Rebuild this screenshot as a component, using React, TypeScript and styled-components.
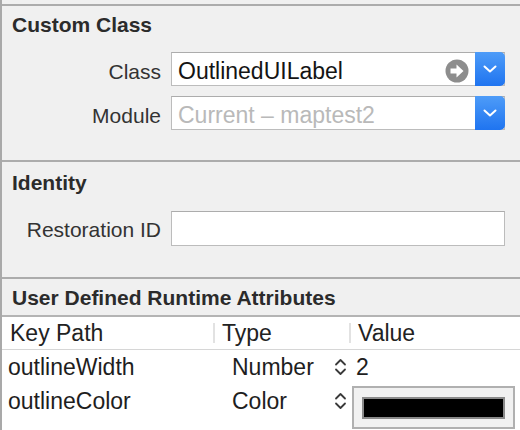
import React from "react";
import styled, { createGlobalStyle } from "styled-components";

const Global = createGlobalStyle`
  html, body { margin: 0; padding: 0; background: #f0f0f0; }
  body { font-family: "Liberation Sans", Arial, sans-serif; }
  #root { width: 520px; height: 430px; overflow: hidden; }
`;

const Inspector = styled.div`
  width: 520px;
  height: 430px;
  box-sizing: border-box;
  border-left: 2px solid #a9a9a9;
  padding-top: 4px;
  background: #f0f0f0;
  display: flex;
  flex-direction: column;
`;

const Section = styled.section<{ $top: number; $gap: number; $bottom: number; $grow?: boolean }>`
  border-top: 2px solid #acacac;
  padding: ${(p) => p.$top}px 15px ${(p) => p.$bottom}px 10px;
  display: flex;
  flex-direction: column;
  gap: ${(p) => p.$gap}px;
  flex: ${(p) => (p.$grow ? 1 : "none")};
`;

const Title = styled.h2`
  margin: 0;
  font-size: 21px;
  line-height: 24px;
  font-weight: bold;
  color: #2b2b2b;
  white-space: nowrap;
`;

const Form = styled.div<{ $rowGap: number }>`
  display: grid;
  grid-template-columns: 149px 1fr;
  column-gap: 10px;
  row-gap: ${(p) => p.$rowGap}px;
  align-items: center;
`;

const Label = styled.label<{ $drop: number }>`
  text-align: right;
  font-size: 21px;
  color: #333;
  white-space: nowrap;
  padding-top: ${(p) => p.$drop}px;
`;

const Field = styled.div<{ $height: number }>`
  height: ${(p) => p.$height}px;
  box-sizing: border-box;
  display: flex;
  align-items: stretch;
  background: #fff;
  border: 1px solid #bcbcbc;
  border-top-color: #acacac;
`;

const FieldText = styled.span<{ $muted?: boolean }>`
  flex: 1;
  display: flex;
  align-items: center;
  padding: 5px 0 0 6px;
  font-size: 23px;
  color: ${(p) => (p.$muted ? "#b9b9b9" : "#141414")};
  white-space: nowrap;
  overflow: hidden;
`;

const GoIcon = styled.span`
  display: flex;
  align-items: center;
  padding: 4px 6px 0 0;
`;

const PopButton = styled.span`
  width: 30px;
  margin: -1px -1px -1px 0;
  border-radius: 0 5px 5px 0;
  background: linear-gradient(#4e9cf8, #1f74f0);
  display: flex;
  align-items: center;
  justify-content: center;
`;

const Table = styled.div`
  margin: 0 -15px 0 -10px;
  border-top: 2px solid #b4b4b4;
  background: #fff;
  flex: 1;
`;

const HeaderRow = styled.div`
  height: 32px;
  display: flex;
  align-items: center;
  border-bottom: 1px solid #d6d6d6;
  font-size: 23px;
  color: #222;
`;

const HeaderCell = styled.span<{ $width?: number; $pad: number }>`
  width: ${(p) => (p.$width ? `${p.$width}px` : "auto")};
  padding-left: ${(p) => p.$pad}px;
  box-sizing: border-box;
  white-space: nowrap;
`;

const ColumnRule = styled.span`
  width: 2px;
  height: 20px;
  background: #e2e2e2;
`;

const Row = styled.div<{ $height: number }>`
  height: ${(p) => p.$height}px;
  display: grid;
  grid-template-columns: 230px 102px 22px 1fr;
  align-items: start;
  font-size: 23px;
  color: #1e1e1e;
`;

const Cell = styled.span<{ $pad?: number }>`
  line-height: 34px;
  padding-left: ${(p) => p.$pad ?? 0}px;
  white-space: nowrap;
`;

const Stepper = styled.span`
  height: 34px;
  display: flex;
  align-items: center;
`;

const ColorWell = styled.span`
  margin: 2px 0 0 -4px;
  width: 163px;
  height: 43px;
  box-sizing: border-box;
  border: 2px solid #b0b0b0;
  background: #f1f1f1;
  padding: 9px 8px 8px 8px;
  display: flex;
`;

const Swatch = styled.span<{ $color: string }>`
  flex: 1;
  background: ${(p) => p.$color};
  border: 2px solid #8a8a8a;
`;

const ArrowCircle = () => (
  <svg width="24" height="24" viewBox="0 0 24 24">
    <circle cx="12" cy="12" r="11.5" fill="#8d8d8d" />
    <path d="M5.5 9.5h6V5.5l7 6.5-7 6.5v-4h-6z" fill="#fff" />
  </svg>
);

const Chevron = () => (
  <svg width="14" height="8" viewBox="0 0 14 8">
    <path d="M1.5 1.5 7 6.5l5.5-5" fill="none" stroke="#fff" strokeWidth="2" strokeLinecap="round" strokeLinejoin="round" />
  </svg>
);

const UpDown = () => (
  <svg width="13" height="20" viewBox="0 0 13 20">
    <path d="M2 7.5 6.5 3 11 7.5M2 12.5 6.5 17 11 12.5" fill="none" stroke="#3a3a3a" strokeWidth="1.8" strokeLinecap="round" strokeLinejoin="round" />
  </svg>
);

export default function App() {
  return (
    <>
      <Global />
      <Inspector>
        <Section $top={7} $gap={15} $bottom={30}>
          <Title>Custom Class</Title>
          <Form $rowGap={10}>
            <Label $drop={6}>Class</Label>
            <Field $height={34}>
              <FieldText>OutlinedUILabel</FieldText>
              <GoIcon>
                <ArrowCircle />
              </GoIcon>
              <PopButton>
                <Chevron />
              </PopButton>
            </Field>
            <Label $drop={6}>Module</Label>
            <Field $height={34}>
              <FieldText $muted>Current – maptest2</FieldText>
              <PopButton>
                <Chevron />
              </PopButton>
            </Field>
          </Form>
        </Section>
        <Section $top={9} $gap={16} $bottom={31}>
          <Title>Identity</Title>
          <Form $rowGap={0}>
            <Label $drop={2}>Restoration ID</Label>
            <Field $height={35} />
          </Form>
        </Section>
        <Section $top={7} $gap={5} $bottom={0} $grow>
          <Title>User Defined Runtime Attributes</Title>
          <Table>
            <HeaderRow>
              <HeaderCell $width={211} $pad={8}>Key Path</HeaderCell>
              <ColumnRule />
              <HeaderCell $width={134} $pad={7}>Type</HeaderCell>
              <ColumnRule />
              <HeaderCell $pad={7}>Value</HeaderCell>
            </HeaderRow>
            <Row $height={34}>
              <Cell $pad={6}>outlineWidth</Cell>
              <Cell>Number</Cell>
              <Stepper>
                <UpDown />
              </Stepper>
              <Cell>2</Cell>
            </Row>
            <Row $height={46}>
              <Cell $pad={6}>outlineColor</Cell>
              <Cell>Color</Cell>
              <Stepper>
                <UpDown />
              </Stepper>
              <ColorWell>
                <Swatch $color="#000" />
              </ColorWell>
            </Row>
          </Table>
        </Section>
      </Inspector>
    </>
  );
}
